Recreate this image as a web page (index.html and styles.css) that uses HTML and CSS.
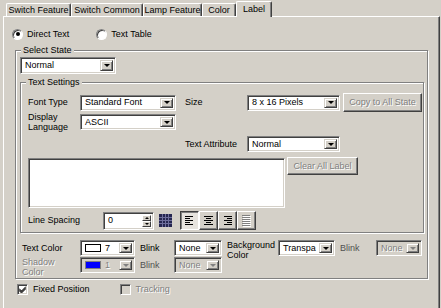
FILE: index.html
```html
<!DOCTYPE html>
<html>
<head>
<meta charset="utf-8">
<link rel="stylesheet" href="styles.css">
</head>
<body>
<div class="tabs">
  <div class="tab w65">Switch Feature</div>
  <div class="tab w72">Switch Common</div>
  <div class="tab w59">Lamp Feature</div>
  <div class="tab w34">Color</div>
  <div class="tab active">Label</div>
</div>
<div class="panel">
  <div class="radios">
    <div class="radio"><span class="rb on"></span>Direct Text</div>
    <div class="radio"><span class="rb"></span>Text Table</div>
  </div>
  <fieldset class="group state">
    <legend>Select State</legend>
    <div class="gbody state-body">
      <div class="combo w96 tall"><span class="val">Normal</span><span class="drop"></span></div>
      <fieldset class="group settings">
        <legend>Text Settings</legend>
        <div class="gbody settings-body">
          <div class="row r1">
            <span class="lbl l52">Font Type</span>
            <div class="combo w96"><span class="val">Standard Font</span><span class="drop"></span></div>
            <span class="lbl l62 ml9">Size</span>
            <div class="combo w93"><span class="val">8 x 16 Pixels</span><span class="drop"></span></div>
            <div class="btn w79 ml3">Copy to All State</div>
          </div>
          <div class="row r2">
            <span class="lbl l52 two">Display<br>Language</span>
            <div class="combo w96"><span class="val">ASCII</span><span class="drop"></span></div>
          </div>
          <div class="row r3">
            <span class="lbl l62">Text Attribute</span>
            <div class="combo w93"><span class="val">Normal</span><span class="drop"></span></div>
          </div>
          <div class="row r4">
            <div class="textbox"></div>
            <div class="btn w71 ml2">Clear All Label</div>
          </div>
          <div class="row r5">
            <span class="lbl l75">Line Spacing</span>
            <div class="spin">
              <span class="val">0</span>
              <span class="spinbtns"><span class="sb up"></span><span class="sb down"></span></span>
            </div>
            <span class="gridicon">
              <svg width="15" height="15" viewBox="0 0 15 15">
                <rect x="1" y="1" width="13" height="13" fill="#262650"/>
                <path d="M1 4.5h13M1 7.5h13M1 10.5h13M4.5 1v13M7.5 1v13M10.5 1v13" stroke="#6e6e9c" stroke-width="1"/>
              </svg>
            </span>
            <div class="aligns">
              <span class="abtn on">
                <svg width="9" height="9" viewBox="0 0 9 9"><path d="M0 0.5h8M0 2.5h5M0 4.5h8M0 6.5h5M0 8.5h8" stroke="#000"/></svg>
              </span>
              <span class="abtn">
                <svg width="9" height="9" viewBox="0 0 9 9"><path d="M0 0.5h9M2 2.5h5M0 4.5h9M2 6.5h5M0 8.5h9" stroke="#000"/></svg>
              </span>
              <span class="abtn">
                <svg width="9" height="9" viewBox="0 0 9 9"><path d="M1 0.5h8M4 2.5h5M1 4.5h8M4 6.5h5M1 8.5h8" stroke="#000"/></svg>
              </span>
              <span class="abtn off">
                <svg width="9" height="11" viewBox="0 0 9 11"><path d="M0 0.5h8M0 2.5h8M0 4.5h8M0 6.5h8M0 8.5h8M0 10.5h8" stroke="#808080"/></svg>
              </span>
            </div>
          </div>
        </div>
      </fieldset>
      <div class="row r6">
        <span class="lbl l58">Text Color</span>
        <div class="combo w55"><span class="val"><span class="swatch white"></span>7</span><span class="drop"></span></div>
        <span class="lbl l34 ml5">Blink</span>
        <div class="combo w48"><span class="val">None</span><span class="drop"></span></div>
        <span class="lbl l51 ml5 two top">Background<br>Color</span>
        <div class="combo w57"><span class="val">Transpa</span><span class="drop"></span></div>
        <span class="lbl l36 ml5 dim">Blink</span>
        <div class="combo w46 off"><span class="val">None</span><span class="drop"></span></div>
      </div>
      <div class="row r7">
        <span class="lbl l58 two top dis">Shadow<br>Color</span>
        <div class="combo w55 off"><span class="val"><span class="swatch blue"></span>1</span><span class="drop"></span></div>
        <span class="lbl l34 ml5 dim">Blink</span>
        <div class="combo w48 off"><span class="val">None</span><span class="drop"></span></div>
      </div>
    </div>
  </fieldset>
  <div class="checks">
    <div class="check"><span class="cb on"><svg width="7" height="7" viewBox="0 0 7 7"><path d="M0 2.5l2.5 2.5l4.5-4.5M0 3.5l2.5 2.5l4.5-4.5M0 4.5l2.5 2.5l4.5-4.5" stroke="#000" fill="none"/></svg></span>Fixed Position</div>
    <div class="check dis"><span class="cb off"></span>Tracking</div>
  </div>
</div>
</body>
</html>
```
FILE: styles.css
```css
* { box-sizing: border-box; }
body {
  margin: 0;
  width: 441px;
  height: 308px;
  overflow: hidden;
  background: #d4d0c8;
  color: #000;
  font-family: "Liberation Sans", Arial, sans-serif;
  font-size: 9px;
  line-height: 11px;
}

/* tabs */
.tabs { display: flex; align-items: flex-end; height: 16px; padding-left: 6px; }
.tab {
  height: 13px;
  line-height: 12px;
  text-align: center;
  white-space: nowrap;
  border-top: 1px solid #fff;
  border-left: 1px solid #fff;
  border-right: 1px solid #404040;
  box-shadow: inset -1px 0 #808080;
  border-radius: 2px 2px 0 0;
}
.tab.active {
  position: relative;
  z-index: 1;
  width: 36px;
  height: 16px;
  margin-bottom: -1px;
  line-height: 14px;
  background: #d4d0c8;
}
.w65 { width: 65px; }
.w72 { width: 72px; }
.w59 { width: 59px; }
.w34 { width: 34px; }

.panel {
  margin-left: 3px;
  width: 437px;
  height: 300px;
  border-top: 1px solid #fff;
  border-left: 1px solid #fff;
  border-right: 1px solid #404040;
  box-shadow: inset -1px 0 #808080;
}

/* radios */
.radios { display: flex; gap: 27px; margin-top: 11px; padding-left: 8px; height: 12px; }
.radio { display: flex; align-items: center; gap: 4px; }
.rb {
  position: relative;
  width: 11px; height: 11px;
  border-radius: 50%;
  border: 1px solid;
  border-color: #808080 #fff #fff #808080;
  box-shadow: inset 1px 1px #404040;
  background: #fff;
}
.rb.on::after {
  content: "";
  position: absolute;
  left: 2.5px; top: 2.5px;
  width: 4px; height: 4px;
  border-radius: 50%;
  background: #000;
}

/* groups */
.group {
  margin: 0;
  padding: 0;
  min-inline-size: 0;
  border: 1px solid #808080;
  box-shadow: 1px 1px 0 #fff, inset 1px 1px 0 #fff;
}
.group legend {
  padding: 0 2px;
  line-height: 11px;
  background: #d4d0c8;
}
.state { margin: 5px 0 0 11px; width: 413px; }
.state legend { margin-left: 5px; }
.state-body { padding: 1px 0 4px 4px; }
.settings { margin-top: 3px; width: 404px; }
.settings legend { margin-left: 5px; }
.settings-body { padding: 0 0 2px 7px; }

/* rows */
.row { display: flex; align-items: center; }
.r1 { margin-top: 5px; height: 19px; }
.r2 { height: 20px; }
.r3 { margin-top: 4px; height: 16px; padding-left: 157px; }
.r4 { margin-top: 5px; height: 51px; align-items: flex-start; }
.r5 { margin-top: 3px; height: 19px; }
.r6 { margin-top: 7px; height: 17px; padding-left: 2px; align-items: flex-start; }
.r7 { height: 17px; padding-left: 2px; align-items: flex-start; }
.r6 .lbl, .r7 .lbl { line-height: 16px; }
.r6 .lbl.two, .r7 .lbl.two { line-height: 10px; }

.lbl { white-space: nowrap; flex: none; }
.lbl.two { line-height: 10px; }
.lbl.dis { color: #808080; text-shadow: 1px 1px 0 #fff; }
.lbl.dim { color: #505050; }
.l34 { width: 34px; }
.l36 { width: 36px; }
.l51 { width: 51px; }
.l52 { width: 52px; }
.l58 { width: 58px; }
.l62 { width: 62px; }
.l75 { width: 75px; }
.ml2 { margin-left: 2px; }
.ml3 { margin-left: 3px; }
.ml5 { margin-left: 5px; }
.ml9 { margin-left: 9px; }

/* combo box */
.combo {
  display: flex;
  flex: none;
  height: 16px;
  padding: 2px;
  background: #fff;
  border: 1px solid;
  border-color: #808080 #fff #fff #808080;
  box-shadow: inset 1px 1px #404040, inset -1px -1px #d4d0c8;
}
.combo.tall { height: 17px; }
.w46 { width: 46px; }
.w48 { width: 48px; }
.w55 { width: 55px; }
.w57 { width: 57px; }
.w71 { width: 71px; }
.w79 { width: 79px; }
.w93 { width: 93px; }
.w96 { width: 96px; }
.val {
  flex: 1;
  display: flex;
  align-items: center;
  padding-left: 2px;
  white-space: nowrap;
  overflow: hidden;
}
.drop {
  flex: none;
  width: 13px;
  display: flex;
  align-items: center;
  justify-content: center;
  background: #d4d0c8;
  border: 1px solid;
  border-color: #d4d0c8 #404040 #404040 #d4d0c8;
  box-shadow: inset 1px 1px #fff, inset -1px -1px #808080;
}
.drop::after {
  content: "";
  border-left: 3px solid transparent;
  border-right: 3px solid transparent;
  border-top: 3px solid #000;
}
.combo.off { background: #d4d0c8; }
.combo.off .val { color: #808080; text-shadow: 1px 1px 0 #fff; }
.combo.off .drop::after { border-top-color: #808080; }

.swatch {
  width: 16px; height: 8px;
  margin-right: 4px;
  border: 1px solid #000;
}
.swatch.white { background: #fff; }
.swatch.blue { background: #0000ff; border-color: #808080; }

/* buttons */
.btn {
  flex: none;
  height: 19px;
  line-height: 17px;
  text-align: center;
  white-space: nowrap;
  color: #808080;
  text-shadow: 1px 1px 0 #fff;
  background: #d4d0c8;
  border: 1px solid;
  border-color: #fff #404040 #404040 #fff;
  box-shadow: inset -1px -1px #808080;
}
.r4 .btn { height: 18px; line-height: 16px; }

.textbox {
  flex: none;
  width: 257px;
  height: 50px;
  margin-top: 1px;
  background: #fff;
  border: 1px solid;
  border-color: #808080 #fff #fff #808080;
  box-shadow: inset 1px 1px #404040, inset -1px -1px #d4d0c8;
}

/* spin */
.spin {
  display: flex;
  flex: none;
  width: 51px;
  height: 18px;
  padding: 2px;
  background: #fff;
  border: 1px solid;
  border-color: #808080 #fff #fff #808080;
  box-shadow: inset 1px 1px #404040, inset -1px -1px #d4d0c8;
}
.spinbtns { display: flex; flex-direction: column; width: 9px; }
.sb {
  flex: 1;
  display: flex;
  align-items: center;
  justify-content: center;
  background: #d4d0c8;
  border: 1px solid;
  border-color: #fff #404040 #404040 #fff;
}
.sb.up::after { content: ""; border-left: 2px solid transparent; border-right: 2px solid transparent; border-bottom: 2px solid #000; }
.sb.down::after { content: ""; border-left: 2px solid transparent; border-right: 2px solid transparent; border-top: 2px solid #000; }

.gridicon { display: flex; margin-left: 4px; }

.aligns { display: flex; margin-left: 7px; }
.abtn {
  width: 19px;
  height: 19px;
  display: flex;
  align-items: center;
  justify-content: center;
  background: #d4d0c8;
  border: 1px solid;
  border-color: #fff #404040 #404040 #fff;
  box-shadow: inset -1px -1px #808080;
}
.abtn.on {
  background: #e6e3de;
  border-color: #404040 #fff #fff #404040;
  box-shadow: inset 1px 1px #808080;
}
.abtn.off svg { filter: drop-shadow(1px 1px 0 #fff); }

/* checks */
.checks { display: flex; gap: 30px; margin-top: 5px; padding-left: 13px; height: 11px; }
.check { display: flex; align-items: center; gap: 5px; }
.check.dis { color: #808080; text-shadow: 1px 1px 0 #fff; }
.cb {
  width: 11px; height: 11px;
  display: flex;
  align-items: center;
  justify-content: center;
  border: 1px solid;
  border-color: #808080 #fff #fff #808080;
  box-shadow: inset 1px 1px #404040, inset -1px -1px #d4d0c8;
  background: #fff;
}
.cb.off { background: #d4d0c8; }
```
